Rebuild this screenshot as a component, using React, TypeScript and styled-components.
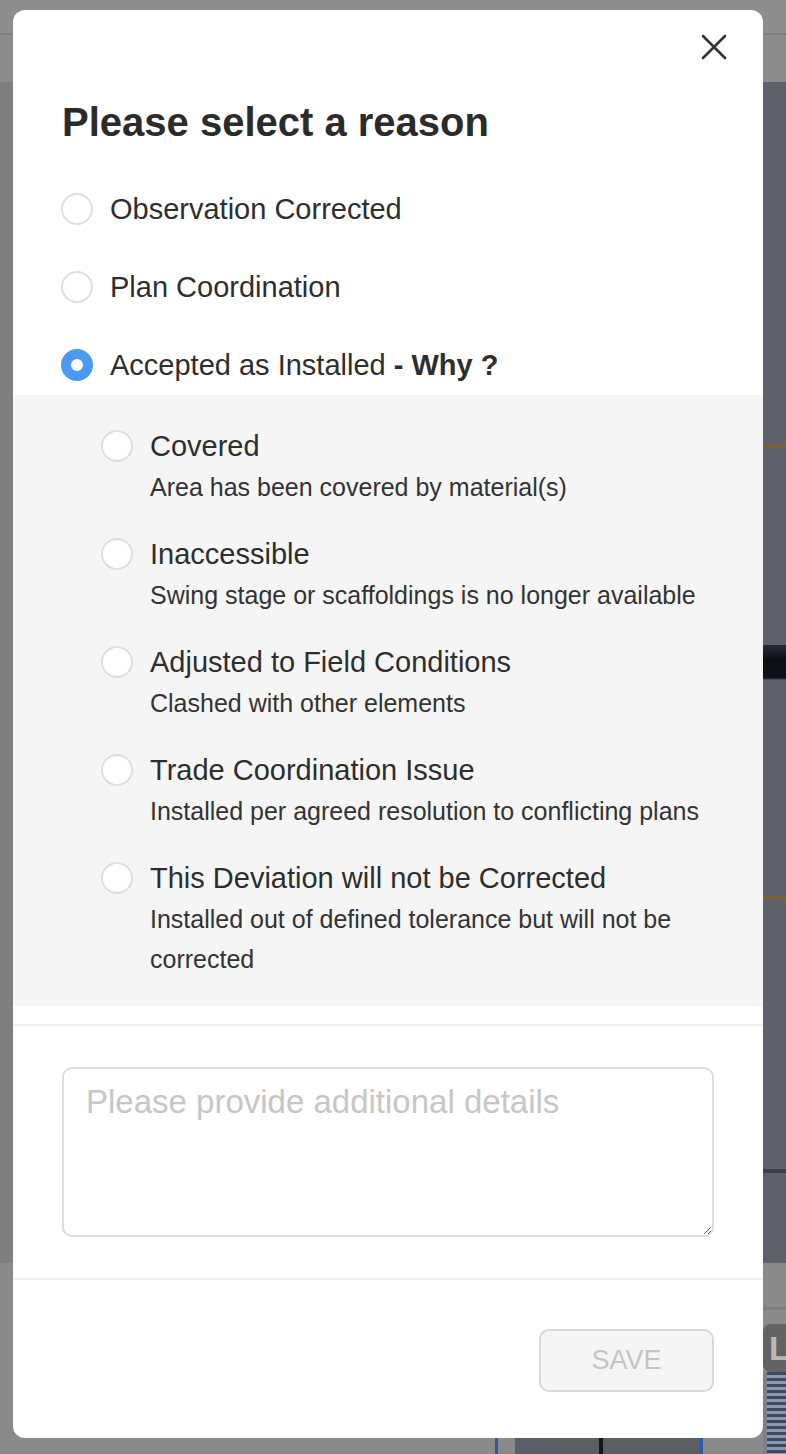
import * as React from "react";
import styled, { createGlobalStyle } from "styled-components";

const GlobalStyle = createGlobalStyle`
	html, body {
		margin: 0;
		padding: 0;
		background: #8a8a8a;
	}
	* {
		box-sizing: border-box;
	}
`;

const FONT = `"Liberation Sans", Helvetica, Arial, sans-serif`;

const subReasons = [
	{ id: "covered", title: "Covered", text: "Area has been covered by material(s)" },
	{ id: "inaccessible", title: "Inaccessible", text: "Swing stage or scaffoldings is no longer available" },
	{ id: "adjusted", title: "Adjusted to Field Conditions", text: "Clashed with other elements" },
	{ id: "trade", title: "Trade Coordination Issue", text: "Installed per agreed resolution to conflicting plans" },
	{
		id: "deviation",
		title: "This Deviation will not be Corrected",
		text: "Installed out of defined tolerance but will not be corrected",
	},
];

export default function App() {
	const [reason, setReason] = React.useState("accepted");
	const [subReason, setSubReason] = React.useState("");
	const [details, setDetails] = React.useState("");

	return (
		<>
			<GlobalStyle />
			<Page>
				<Backdrop>
					<TopBar />
					<SubBar />
					<MainArea>
						<Sidebar />
						<Photo />
					</MainArea>
					<BottomArea>
						<BottomLeft>
							<BottomStrip>
								<StripGap $width={495} />
								<StripLine />
								<StripGap $width={17} />
								<StripPhoto />
								<StripLine />
							</BottomStrip>
						</BottomLeft>
						<BottomRight>
							<BadgeGap />
							<Badge>L</Badge>
							<Building />
						</BottomRight>
					</BottomArea>
				</Backdrop>

				<Overlay>
					<Modal>
						<CloseButton aria-label="Close">
							<svg width="26" height="26" viewBox="0 0 26 26">
								<path d="M2 2 L24 24 M24 2 L2 24" stroke="#333" strokeWidth="2.6" strokeLinecap="round" />
							</svg>
						</CloseButton>

						<Title>Please select a reason</Title>

						<OptionList>
							<Option onClick={() => setReason("corrected")}>
								<Radio $checked={reason === "corrected"} />
								<OptionLabel>Observation Corrected</OptionLabel>
							</Option>
							<Option onClick={() => setReason("plan")}>
								<Radio $checked={reason === "plan"} />
								<OptionLabel>Plan Coordination</OptionLabel>
							</Option>
							<Option onClick={() => setReason("accepted")}>
								<Radio $checked={reason === "accepted"} />
								<OptionLabel>
									Accepted as Installed <strong>- Why ?</strong>
								</OptionLabel>
							</Option>
						</OptionList>

						<SubPanel>
							{subReasons.map((item) => (
								<SubOption key={item.id} onClick={() => setSubReason(item.id)}>
									<SubRadioWrap>
										<Radio $checked={subReason === item.id} />
									</SubRadioWrap>
									<SubText>
										<SubTitle>{item.title}</SubTitle>
										<SubDescription>{item.text}</SubDescription>
									</SubText>
								</SubOption>
							))}
						</SubPanel>

						<DetailsSection>
							<DetailsInput
								placeholder="Please provide additional details"
								value={details}
								onChange={(e) => setDetails(e.target.value)}
							/>
						</DetailsSection>

						<Footer>
							<SaveButton disabled={!subReason}>SAVE</SaveButton>
						</Footer>
					</Modal>
				</Overlay>
			</Page>
		</>
	);
}

const Page = styled.div`
	position: relative;
	height: 1454px;
	overflow: hidden;
	font-family: ${FONT};
`;

const Backdrop = styled.div`
	display: flex;
	flex-direction: column;
	height: 100%;
`;

const TopBar = styled.div`
	height: 35px;
	background: #8e8e8e;
	border-bottom: 2px solid #7e7e7e;
`;

const SubBar = styled.div`
	height: 47px;
	background: #8b8b8b;
`;

const MainArea = styled.div`
	display: flex;
	height: 1181px;
`;

const Sidebar = styled.div`
	flex: 1;
	background: #7f7f7f;
`;

const Photo = styled.div`
	width: 23px;
	background:
		linear-gradient(
			to bottom,
			transparent 0,
			transparent 362px,
			#7a5f3a 362px,
			#7a5f3a 366px,
			transparent 366px,
			transparent 563px,
			#2a2c35 563px,
			#0c0d12 578px,
			#111217 596px,
			transparent 598px,
			transparent 814px,
			#7a6040 814px,
			#7a6040 818px,
			transparent 818px,
			transparent 1087px,
			#3e4049 1087px,
			#3e4049 1091px,
			transparent 1091px
		),
		#5f616a;
`;

const BottomArea = styled.div`
	flex: 1;
	display: flex;
	background: #8a8a8a;
`;

const BottomLeft = styled.div`
	flex: 1;
	display: flex;
	flex-direction: column;
	justify-content: flex-end;
`;

const BottomStrip = styled.div`
	display: flex;
	height: 20px;
`;

const StripGap = styled.div<{ $width: number }>`
	width: ${(p) => p.$width}px;
`;

const StripLine = styled.div`
	width: 3px;
	background: #2d5aa5;
`;

const StripPhoto = styled.div`
	width: 185px;
	background:
		linear-gradient(to right, transparent 84px, #15161b 84px, #15161b 88px, transparent 88px),
		#5c5e66;
`;

const BottomRight = styled.div`
	width: 23px;
	display: flex;
	flex-direction: column;
`;

const BadgeGap = styled.div`
	height: 47px;
	border-bottom: 3px solid #7e7e7e;
	margin-bottom: 14px;
`;

const Badge = styled.div`
	height: 48px;
	background: #626262;
	border-radius: 8px 0 0 8px;
	color: #b8b8b8;
	font-weight: bold;
	font-size: 34px;
	line-height: 48px;
	padding-left: 6px;
	overflow: hidden;
`;

const Building = styled.div`
	flex: 1;
	background: repeating-linear-gradient(to bottom, #3d4a66 0, #3d4a66 3px, #8c98ae 3px, #8c98ae 6px);
	border-left: 4px solid #7c8089;
`;

const Overlay = styled.div`
	position: absolute;
	inset: 0;
	padding: 10px 23px 0 13px;
`;

const Modal = styled.div`
	position: relative;
	width: 750px;
	height: 1428px;
	background: #fff;
	border-radius: 12px;
	display: flex;
	flex-direction: column;
	color: #333;
`;

const CloseButton = styled.button`
	position: absolute;
	top: 24px;
	right: 36px;
	width: 26px;
	height: 26px;
	padding: 0;
	border: none;
	background: none;
	cursor: pointer;
	svg {
		display: block;
	}
`;

const Title = styled.h2`
	margin: 0;
	padding: 88px 49px 0;
	font-size: 40px;
	line-height: 48px;
	font-weight: bold;
	color: #2b2b2b;
`;

const OptionList = styled.div`
	display: flex;
	flex-direction: column;
	gap: 18px;
	padding: 33px 48px 0;
`;

const Option = styled.label`
	display: flex;
	align-items: center;
	gap: 17px;
	height: 60px;
	cursor: pointer;
`;

const Radio = styled.span<{ $checked: boolean }>`
	flex: none;
	width: 32px;
	height: 32px;
	border-radius: 50%;
	background: ${(p) => (p.$checked ? "#4a9af5" : "#fff")};
	border: ${(p) => (p.$checked ? "none" : "2px solid #dedede")};
	display: flex;
	align-items: center;
	justify-content: center;
	&::after {
		content: "";
		display: ${(p) => (p.$checked ? "block" : "none")};
		width: 12px;
		height: 12px;
		border-radius: 50%;
		background: #fff;
	}
`;

const OptionLabel = styled.span`
	font-size: 29px;
	line-height: 40px;
	color: #2e2e2e;
	strong {
		font-weight: bold;
	}
`;

const SubPanel = styled.div`
	background: #f5f5f5;
	padding: 30px 48px 27px 88px;
	display: flex;
	flex-direction: column;
	gap: 26px;
`;

const SubOption = styled.label`
	display: flex;
	gap: 17px;
	cursor: pointer;
`;

const SubRadioWrap = styled.div`
	height: 42px;
	display: flex;
	align-items: center;
`;

const SubText = styled.div`
	display: flex;
	flex-direction: column;
`;

const SubTitle = styled.div`
	font-size: 29px;
	line-height: 42px;
	color: #2e2e2e;
`;

const SubDescription = styled.div`
	font-size: 25px;
	line-height: 40px;
	color: #333;
`;

const DetailsSection = styled.div`
	margin-top: 18px;
	border-top: 2px solid #efefef;
	border-bottom: 2px solid #efefef;
	padding: 41px 49px;
`;

const DetailsInput = styled.textarea`
	display: block;
	width: 652px;
	height: 170px;
	border: 2px solid #dcdcdc;
	border-radius: 10px;
	padding: 14px 22px;
	font-family: ${FONT};
	font-size: 33px;
	line-height: 38px;
	color: #333;
	outline: none;
	&::placeholder {
		color: #c6c6c6;
	}
`;

const Footer = styled.div`
	display: flex;
	justify-content: flex-end;
	padding: 49px 49px 0;
`;

const SaveButton = styled.button`
	width: 175px;
	height: 63px;
	background: #f5f5f5;
	border: 2px solid #d8d8d8;
	border-radius: 10px;
	font-family: ${FONT};
	font-size: 27px;
	color: #c4c4c4;
	&:not(:disabled) {
		color: #333;
		cursor: pointer;
	}
`;
